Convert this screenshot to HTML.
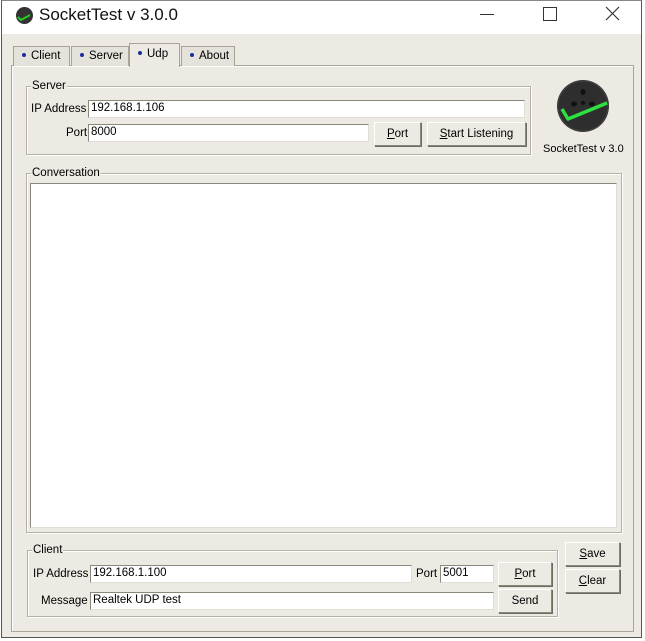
<!DOCTYPE html>
<html><head><meta charset="utf-8"><style>
body{margin:0;width:645px;height:641px;background:#fff;position:relative;overflow:hidden;font-family:"Liberation Sans",sans-serif;font-size:11.5px;color:#000}
.a{position:absolute}
#win{position:absolute;left:1px;top:0;width:641px;height:638px;border:1px solid #555;border-top-color:#888;box-sizing:border-box;background:#eceae3}
#tb{position:absolute;left:0;top:0;width:100%;height:33px;background:#fff}
.grp{position:absolute;border:1px solid #b5b1a4;box-shadow:inset 1px 1px 0 #fff,1px 1px 0 #fff}
.gt{position:absolute;top:-8px;left:4px;background:#eceae3;padding:0 1px;line-height:14px}
.in{position:absolute;background:#fff;border:1px solid #7f9db9;border-color:#8a877c #e0ddd4 #e0ddd4 #8a877c;box-sizing:border-box;padding-left:2px;line-height:15px}
.btn{position:absolute;border:1px solid #a8a597;border-color:#fff #8a877c #8a877c #fff;background:#eceae3;box-sizing:border-box;text-align:center;box-shadow:1px 1px 0 #6e6b60}
.lbl{position:absolute;line-height:14px}
.tab{position:absolute;top:46px;height:20px;border:1px solid #a8a597;border-bottom:none;box-sizing:border-box;background:#e4e2da;line-height:19px;padding-left:8px}
.tab b{display:inline-block;width:4px;height:4px;border-radius:50%;background:#1c2ea0;vertical-align:middle;margin-right:5px;position:relative;top:-1px}
</style></head><body>
<div id="win">
<div id="tb">
 <svg class="a" style="left:13px;top:5px" width="19" height="19" viewBox="0 0 19 19"><circle cx="9.5" cy="9.5" r="8.5" fill="#333"/><path d="M3 11 l3 3 l9-5" stroke="#2c2" stroke-width="2" fill="none"/></svg>
 <div class="a" style="left:37px;top:4px;font-size:17px;line-height:20px;color:#111">SocketTest v 3.0.0</div>
 <div class="a" style="left:478px;top:13px;width:14px;height:1px;background:#333"></div>
 <div class="a" style="left:541px;top:6px;width:12px;height:12px;border:1px solid #333"></div>
 <svg class="a" style="left:603px;top:5px" width="15" height="15"><path d="M1 1L14 14M14 1L1 14" stroke="#333" stroke-width="1.2"/></svg>
</div>
</div>
<div class="a" style="left:11px;top:65px;width:623px;height:567px;border:1px solid #a8a597;box-sizing:border-box;box-shadow:inset 1px 1px 0 #fff"></div>
<div class="tab" style="left:13px;width:57px"><b></b>Client</div>
<div class="tab" style="left:71px;width:58px"><b></b>Server</div>
<div class="tab" style="left:181px;width:54px"><b></b>About</div>
<div class="tab" style="left:129px;top:43px;height:24px;width:51px;background:#eceae3;line-height:20px"><b></b>Udp</div>

<div class="grp" style="left:26px;top:86px;width:503px;height:67px"><div class="gt">Server</div></div>
<div class="lbl" style="left:31px;top:102px">IP Address</div>
<div class="in" style="left:88px;top:100px;width:437px;height:18px">192.168.1.106</div>
<div class="lbl" style="left:66px;top:126px">Port</div>
<div class="in" style="left:88px;top:124px;width:281px;height:18px">8000</div>
<div class="btn" style="left:374px;top:122px;width:47px;height:24px;line-height:22px"><u>P</u>ort</div>
<div class="btn" style="left:427px;top:122px;width:99px;height:24px;line-height:22px"><u>S</u>tart Listening</div>

<svg class="a" style="left:556px;top:79px" width="56" height="56" viewBox="0 0 56 56"><circle cx="27" cy="27" r="26" fill="#2e2e2e"/><circle cx="27" cy="27" r="25" fill="none" stroke="#444"/><ellipse cx="27" cy="13" rx="2.5" ry="3" fill="#111"/><ellipse cx="18" cy="25" rx="3" ry="2.5" fill="#111"/><ellipse cx="36" cy="25" rx="3" ry="2.5" fill="#111"/><circle cx="27" cy="24" r="2" fill="#111"/><path d="M6 30 L12 40 L51 24" stroke="#2ee040" stroke-width="3.5" fill="none" stroke-linejoin="round"/></svg>
<div class="lbl" style="left:543px;top:142px;font-size:11px">SocketTest v 3.0</div>

<div class="grp" style="left:26px;top:173px;width:594px;height:358px"><div class="gt">Conversation</div></div>
<div class="in" style="left:30px;top:183px;width:587px;height:345px"></div>

<div class="grp" style="left:27px;top:550px;width:529px;height:65px"><div class="gt">Client</div></div>
<div class="lbl" style="left:33px;top:567px">IP Address</div>
<div class="in" style="left:90px;top:565px;width:322px;height:18px">192.168.1.100</div>
<div class="lbl" style="left:416px;top:567px">Port</div>
<div class="in" style="left:440px;top:565px;width:54px;height:18px">5001</div>
<div class="btn" style="left:498px;top:562px;width:54px;height:24px;line-height:22px"><u>P</u>ort</div>
<div class="lbl" style="left:41px;top:594px">Message</div>
<div class="in" style="left:90px;top:592px;width:404px;height:18px">Realtek UDP test</div>
<div class="btn" style="left:498px;top:589px;width:54px;height:24px;line-height:22px">Send</div>
<div class="btn" style="left:565px;top:542px;width:55px;height:24px;line-height:22px"><u>S</u>ave</div>
<div class="btn" style="left:565px;top:569px;width:55px;height:24px;line-height:22px"><u>C</u>lear</div>
</body></html>
